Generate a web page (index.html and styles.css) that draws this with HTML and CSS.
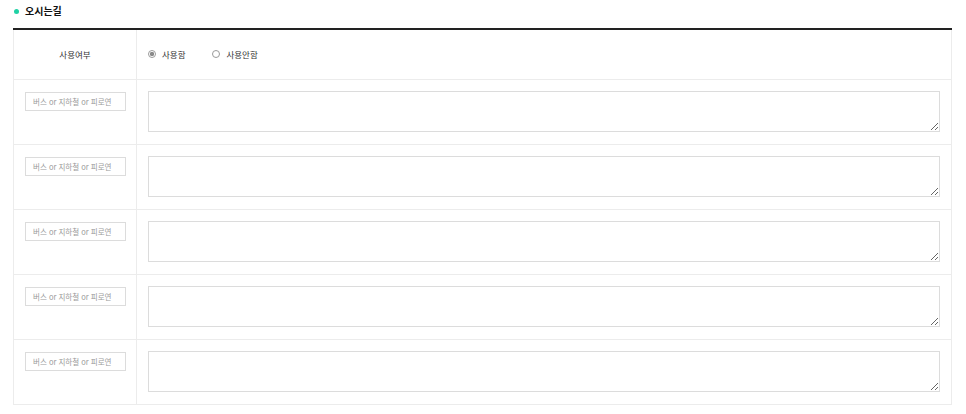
FILE: index.html
```html
<!DOCTYPE html>
<html lang="ko">
<head>
<meta charset="utf-8">
<link rel="stylesheet" href="styles.css">
</head>
<body>
<div class="page">
  <h2 class="title"><span class="dot"></span>오시는길</h2>
  <table class="form">
    <tr>
      <th class="head">사용여부</th>
      <td class="radios">
        <div class="radio-group">
          <label class="radio"><input type="radio" name="use" checked><span>사용함</span></label>
          <label class="radio"><input type="radio" name="use"><span>사용안함</span></label>
        </div>
      </td>
    </tr>
    <tr>
      <th class="key"><input class="field" type="text" placeholder="버스 or 지하철 or 피로연"></th>
      <td class="val"><textarea class="area"></textarea></td>
    </tr>
    <tr>
      <th class="key"><input class="field" type="text" placeholder="버스 or 지하철 or 피로연"></th>
      <td class="val"><textarea class="area"></textarea></td>
    </tr>
    <tr>
      <th class="key"><input class="field" type="text" placeholder="버스 or 지하철 or 피로연"></th>
      <td class="val"><textarea class="area"></textarea></td>
    </tr>
    <tr>
      <th class="key"><input class="field" type="text" placeholder="버스 or 지하철 or 피로연"></th>
      <td class="val"><textarea class="area"></textarea></td>
    </tr>
    <tr>
      <th class="key"><input class="field" type="text" placeholder="버스 or 지하철 or 피로연"></th>
      <td class="val"><textarea class="area"></textarea></td>
    </tr>
  </table>
</div>
</body>
</html>
```
FILE: styles.css
```css
* { box-sizing: border-box; }
body {
  margin: 0;
  background: #fff;
  font-family: "Noto Sans CJK KR", "Noto Sans", sans-serif;
  color: #333;
}
.page {
  padding: 0 14px 0 13px;
}
.title {
  margin: 0;
  height: 28px;
  padding: 4px 0 0 1px;
  display: flex;
  align-items: flex-start;
  font-size: 10px;
  font-weight: 700;
  color: #111;
  line-height: 14px;
}
.dot {
  width: 5px;
  height: 5px;
  border-radius: 50%;
  background: #1fd1a4;
  margin: 5px 6px 0 0;
}
.form {
  width: 939px;
  border-collapse: collapse;
  border-top: 2px solid #222;
  border-left: 1px solid #ececec;
  border-right: 1px solid #ececec;
  border-bottom: 1px solid #ececec;
}
.form th, .form td {
  padding: 0;
  border-bottom: 1px solid #ececec;
  vertical-align: top;
}
.form th {
  width: 124px;
  border-right: 1px solid #ececec;
  font-weight: 400;
}
.head {
  height: 50px;
  vertical-align: middle !important;
  font-size: 8.5px;
  color: #333;
  text-align: center;
}
.radios {
  vertical-align: middle !important;
  padding-left: 11px !important;
}
.radio-group {
  display: flex;
  align-items: center;
  gap: 27px;
  height: 12px;
}
.radio {
  display: flex;
  align-items: center;
  font-size: 8.5px;
  line-height: 12px;
  color: #333;
}
.radio input {
  appearance: none;
  -webkit-appearance: none;
  width: 8px;
  height: 8px;
  margin: 0 6px 0 0;
  border: 1px solid #9a9a9a;
  border-radius: 50%;
  background: #fff;
}
.radio input:checked {
  background: radial-gradient(circle, #8a8a8a 0 2px, #fff 2.3px);
}
.key {
  height: 65px;
  padding: 12px 0 0 11px !important;
  text-align: left;
}
.field {
  display: block;
  width: 101px;
  height: 19px;
  border: 1px solid #dcdcdc;
  padding: 0 7px;
  font-family: inherit;
  font-size: 7.5px;
  color: #333;
  outline: none;
}
.field::placeholder { color: #9a9a9a; }
.val {
  padding: 11px 11px 12px 11px !important;
}
.area {
  display: block;
  width: 792px;
  height: 41px;
  border: 1px solid #dcdcdc;
  margin: 0;
  font-family: inherit;
  font-size: 9px;
  outline: none;
}
```
